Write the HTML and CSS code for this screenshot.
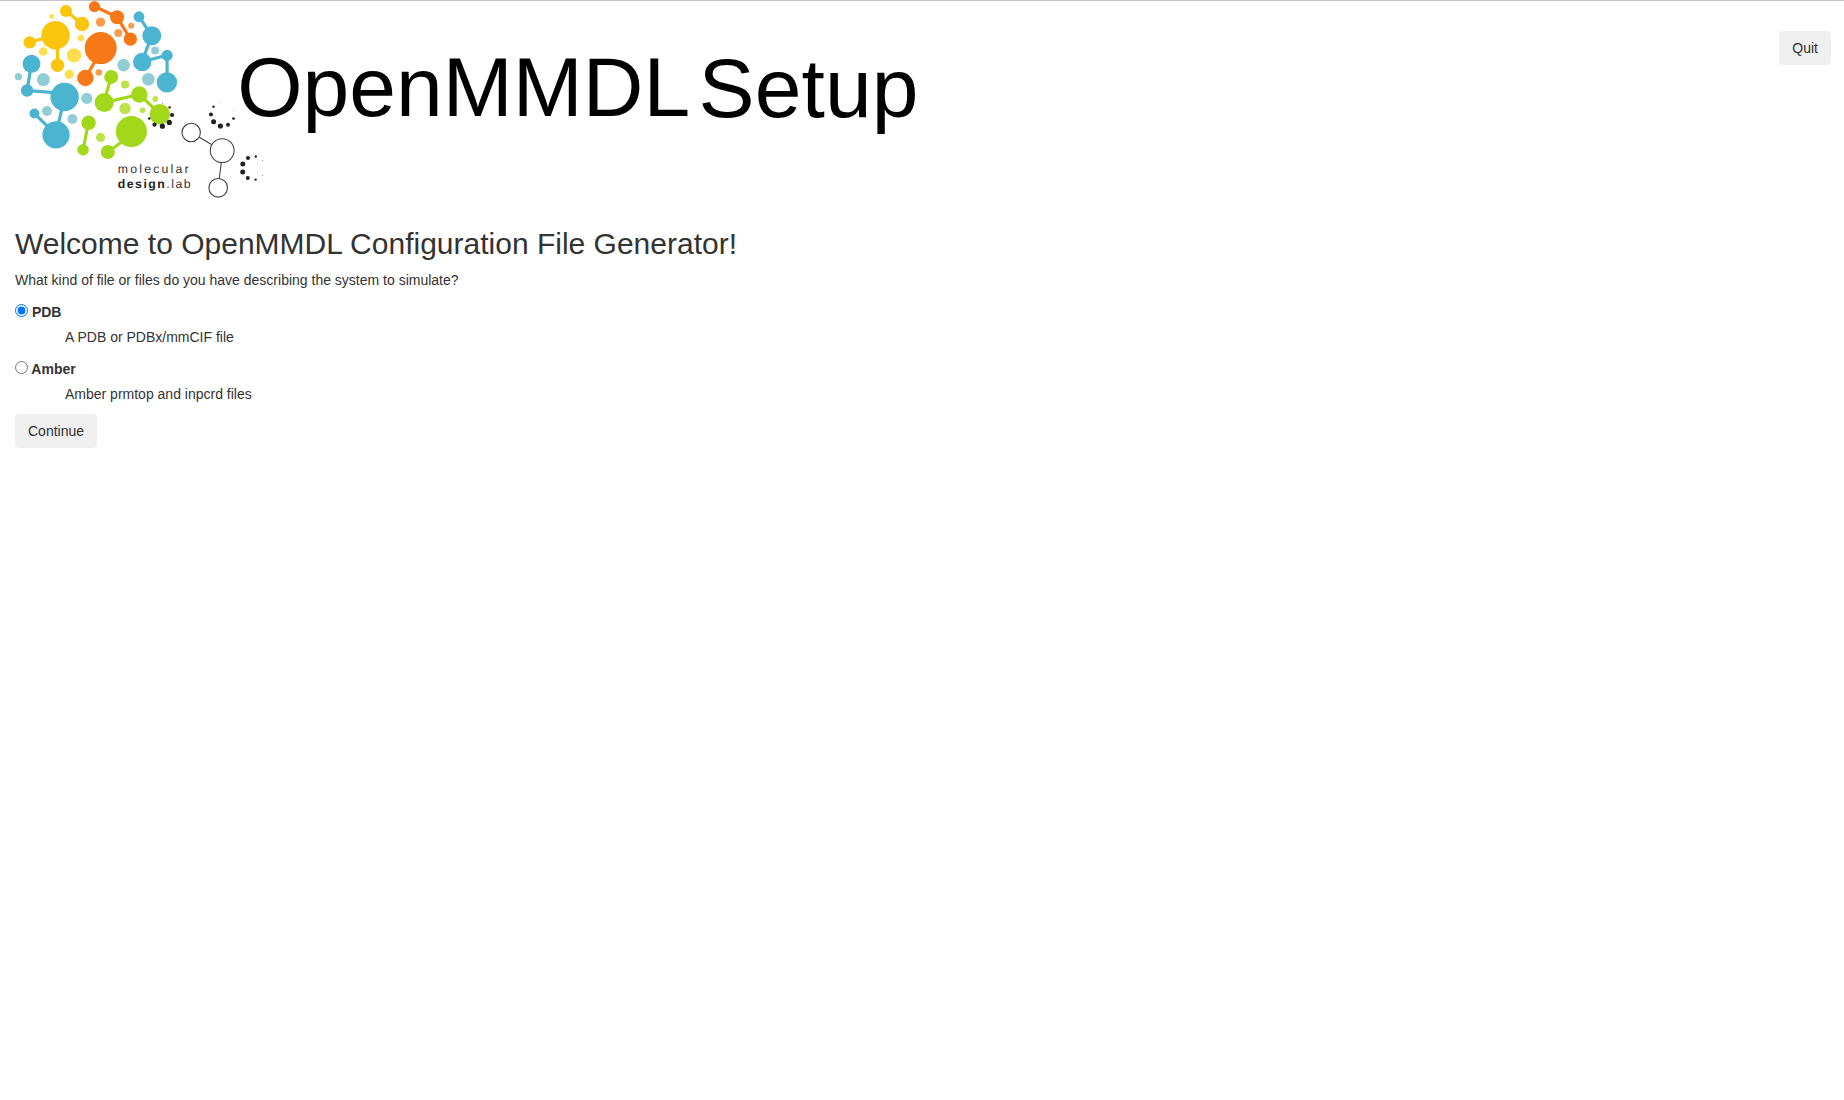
FILE: index.html
```html
<!DOCTYPE html>
<html lang="en">
<head>
<meta charset="utf-8">
<title>OpenMMDL Setup</title>
<link rel="stylesheet" href="styles.css">
</head>
<body>
<header class="header">
  <svg class="logo" width="930" height="206" viewBox="0 0 930 206" role="img" aria-label="OpenMMDL Setup">
    <g class="yellow">
      <path class="bond" d="M66 10.7L82 24M29.7 42.3L55.5 35M57.5 65V35"/>
      <circle cx="66" cy="10.9" r="6"/><circle cx="82" cy="24" r="7.2"/><circle cx="55.5" cy="35.2" r="14.2"/><circle cx="29.7" cy="42.4" r="6.2"/><circle cx="57.5" cy="65.2" r="6.7"/>
    </g>
    <g class="light-yellow">
      <circle cx="51.7" cy="16.4" r="2.3"/><circle cx="81" cy="38" r="3.3"/><circle cx="43.2" cy="51.5" r="4.3"/><circle cx="74" cy="55.4" r="7.2"/><circle cx="69.3" cy="74.3" r="4.5"/>
    </g>
    <g class="orange">
      <path class="bond" d="M94.3 6.3L117 17L130.3 39M85.3 78L100.5 52"/>
      <circle cx="94.4" cy="6.6" r="5.6"/><circle cx="117.1" cy="17.2" r="7"/><circle cx="130.3" cy="39.1" r="6.7"/><circle cx="100.7" cy="48.1" r="16"/><circle cx="85.4" cy="78" r="8.2"/>
    </g>
    <g class="light-orange">
      <circle cx="100.5" cy="22.1" r="4.7"/><circle cx="118.3" cy="33" r="4"/><circle cx="131.1" cy="25.8" r="3"/><circle cx="98.8" cy="72.5" r="3.3"/>
    </g>
    <g class="blue">
      <path class="bond" d="M31.5 63.7L27 90.6L64.5 93.4M64.5 97L56 134.7L34.3 113.3M139 16.7L151.7 35.7L142 61.7L167 55.3L167.2 82.3"/>
      <circle cx="31.5" cy="63.8" r="9"/><circle cx="27.1" cy="90.5" r="6.2"/><circle cx="64.6" cy="97" r="14.2"/><circle cx="34.4" cy="113.5" r="5"/><circle cx="56" cy="134.8" r="13.6"/>
      <circle cx="139" cy="16.7" r="5.4"/><circle cx="151.8" cy="35.7" r="9.5"/><circle cx="142.2" cy="61.9" r="9.2"/><circle cx="167.1" cy="55.4" r="5.6"/><circle cx="166.9" cy="82.4" r="10.2"/>
    </g>
    <g class="light-blue">
      <circle cx="18.4" cy="76.7" r="3.6"/><circle cx="43.4" cy="79.6" r="6.5"/><circle cx="86.8" cy="98.4" r="5.6"/><circle cx="47" cy="111" r="5"/><circle cx="72.4" cy="119" r="5"/><circle cx="155.1" cy="50.5" r="4"/><circle cx="123.6" cy="65.1" r="6.3"/><circle cx="148.4" cy="79.3" r="6.3"/>
    </g>
    <g class="green">
      <path class="bond" d="M111 76.8L104 102.5L139.3 94.5L160 114M107.8 152L131.3 135M88.5 122.7L83 149.7"/>
      <circle cx="111.2" cy="76.9" r="7"/><circle cx="139.3" cy="94.5" r="8.2"/><circle cx="104.2" cy="102.5" r="9.6"/><circle cx="159.8" cy="114.3" r="10.2"/><circle cx="131.4" cy="131.5" r="15.5"/><circle cx="107.8" cy="152" r="7"/><circle cx="88.6" cy="122.8" r="7.2"/><circle cx="83.1" cy="149.7" r="5.7"/>
    </g>
    <g class="light-green">
      <circle cx="125.1" cy="84.5" r="4.1"/><circle cx="155.3" cy="99" r="2.9"/><circle cx="125" cy="108.5" r="5.7"/><circle cx="142.6" cy="110.3" r="2.8"/><circle cx="100.5" cy="137.4" r="4.6"/>
    </g>
    <g class="dots">
      <circle cx="149.3" cy="118.5" r="1.3"/><circle cx="154.5" cy="124.7" r="2.1"/><circle cx="162.4" cy="126.2" r="2.6"/><circle cx="169.3" cy="122.4" r="2.6"/><circle cx="172.1" cy="115" r="2.1"/><circle cx="169.6" cy="107.4" r="1.2"/><circle cx="162.5" cy="103.5" r=".4"/>
      <circle cx="213.5" cy="106.8" r="1.2"/><circle cx="211" cy="114.4" r="2"/><circle cx="213.6" cy="121.8" r="2.5"/><circle cx="220.4" cy="126" r="2.6"/><circle cx="228" cy="124.8" r="2"/><circle cx="233.5" cy="118.6" r="1.3"/><circle cx="233.5" cy="110.5" r=".35"/><circle cx="220.5" cy="102.5" r=".35"/>
      <circle cx="242.8" cy="164" r="2.5"/><circle cx="248" cy="158" r="2"/><circle cx="255.8" cy="156.5" r="1.2"/><circle cx="262.5" cy="160.5" r=".4"/><circle cx="242.7" cy="171.9" r="2.5"/><circle cx="247.8" cy="178" r="2"/><circle cx="255.6" cy="179.6" r="1.2"/><circle cx="262.5" cy="175.5" r=".4"/>
    </g>
    <g class="rings">
      <path d="M199.3 137.3L211.5 144.5M221.3 162.8L219.3 178.2"/>
      <circle cx="191.2" cy="132.5" r="9.2"/><circle cx="222.2" cy="150.6" r="11.9"/><circle cx="218.2" cy="187.8" r="9.3"/>
    </g>
    <text class="lab" x="117.7" y="173" textLength="71" lengthAdjust="spacing">molecular</text>
    <text class="lab" x="117.7" y="188" textLength="73" lengthAdjust="spacing"><tspan class="lab-strong">design</tspan>.lab</text>
    <text class="title" x="237.2" y="116" textLength="453">OpenMMDL</text>
    <text class="title" x="698.5" y="117" textLength="220">Setup</text>
  </svg>
  <button class="btn quit" type="button">Quit</button>
</header>
<main class="content">
  <h2 class="heading">Welcome to OpenMMDL Configuration File Generator!</h2>
  <p class="question">What kind of file or files do you have describing the system to simulate?</p>
  <form>
    <div class="option">
      <label class="option-label"><input class="radio" type="radio" name="type" checked> PDB</label>
      <p class="description">A PDB or PDBx/mmCIF file</p>
    </div>
    <div class="option">
      <label class="option-label"><input class="radio" type="radio" name="type"> Amber</label>
      <p class="description">Amber prmtop and inpcrd files</p>
    </div>
    <button class="btn" type="button">Continue</button>
  </form>
</main>
</body>
</html>
```
FILE: styles.css
```css
* { box-sizing: border-box; }
body {
  margin: 0;
  border-top: 1px solid #c4c4c4;
  background: #fff;
  color: #333;
  font: 14px/20px "Liberation Sans", Arial, sans-serif;
}
.header {
  display: flex;
  justify-content: space-between;
  align-items: flex-start;
  height: 206px;
  padding-right: 13px;
}
.logo { display: block; margin-top: -1px; }
.quit { margin-top: 30px; }
.btn {
  display: block;
  height: 34px;
  padding: 6px 12px;
  border: 1px solid transparent;
  border-radius: 4px;
  background: #efefef;
  color: #333;
  font: inherit;
}
.content { padding: 20px 15px 0; }
.heading { margin: 0 0 10px; font-size: 30px; font-weight: 500; line-height: 33px; }
.question { margin: 0 0 10px; }
.option { margin-bottom: 10px; }
.option-label { display: inline-block; margin-bottom: 5px; font-weight: 700; vertical-align: top; }
.radio { width: 13px; height: 13px; margin: 4px 0 0; }
.description { margin: 0; padding-left: 50px; }

.bond { fill: none; stroke-width: 3.2; }
.yellow { fill: #fbc50d; stroke: #fbc50d; }
.orange { fill: #f77816; stroke: #f77816; }
.blue { fill: #4ab4d1; stroke: #4ab4d1; }
.green { fill: #a2d71a; stroke: #a2d71a; }
.yellow circle, .orange circle, .blue circle, .green circle { stroke: none; }
.light-yellow { fill: #fbdf4e; }
.light-orange { fill: #f99d4a; }
.light-blue { fill: #90cdd5; }
.light-green { fill: #bce34a; }
.dots { fill: #222; }
.rings { fill: none; stroke: #444; stroke-width: 1.1; }
.lab { fill: #333; font-size: 12.3px; text-rendering: geometricPrecision; }
.lab-strong { fill: #222; font-weight: 700; }
.title { fill: #000; font-size: 84px; }
```
